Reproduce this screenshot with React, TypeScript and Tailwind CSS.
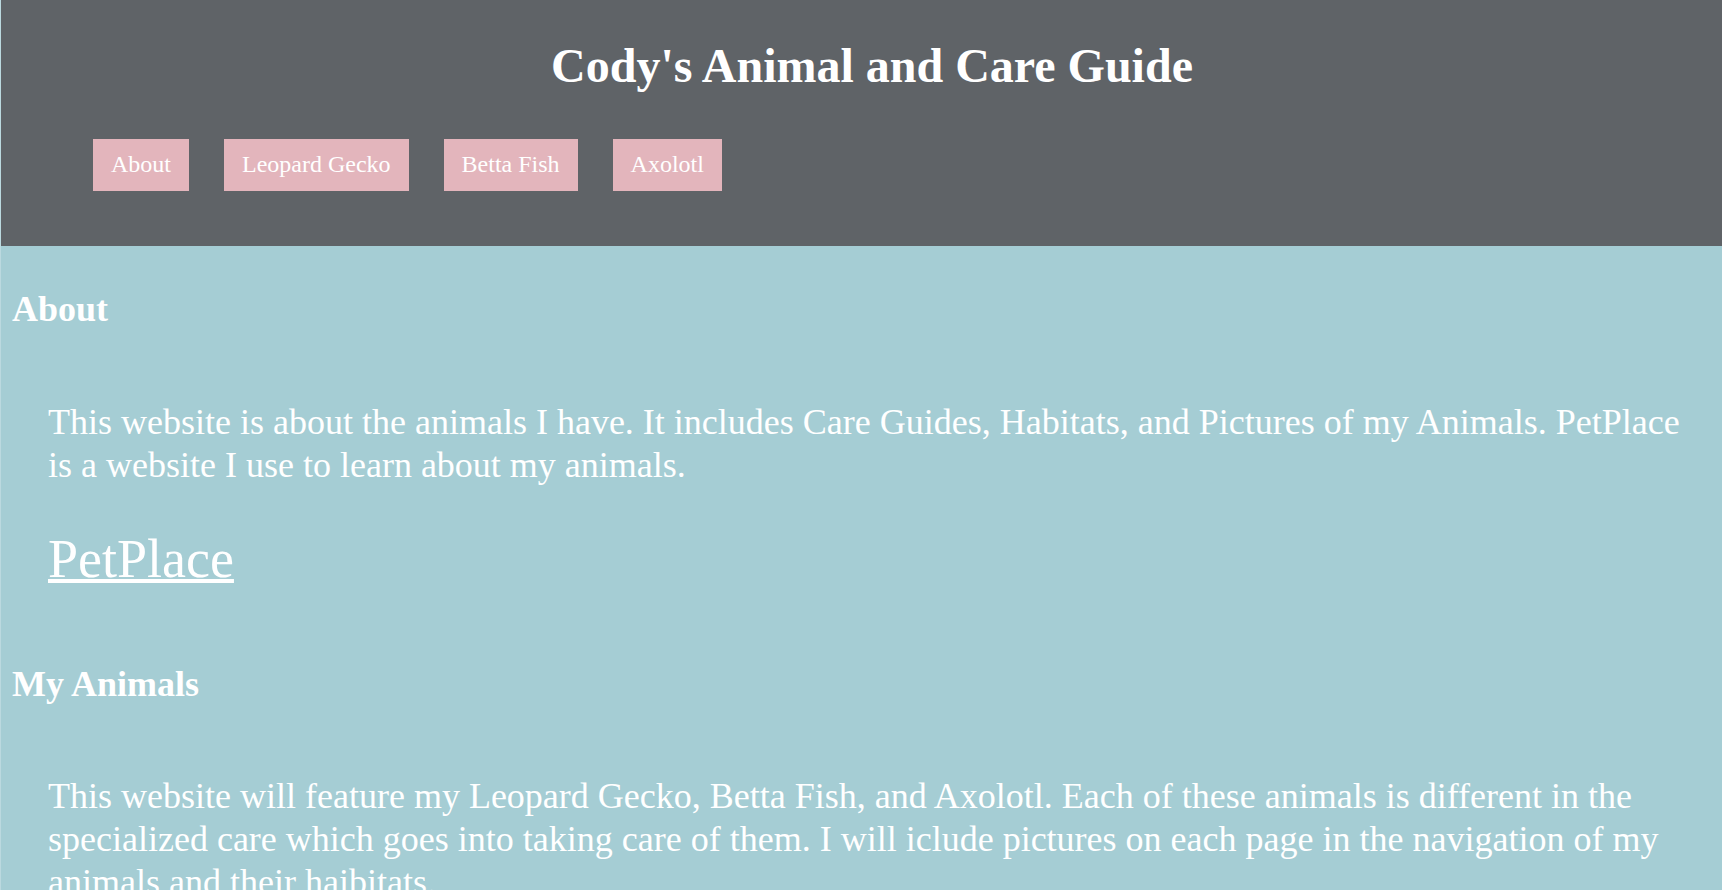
import React from 'react';

const links = ['About', 'Leopard Gecko', 'Betta Fish', 'Axolotl'];

export default function App() {
  return (
    <div className="min-h-screen border-l border-white/25 bg-[#a5cdd4] font-['Liberation_Serif',serif] text-white">
      <header className="h-[246px] bg-[#5f6367] pt-[38px]">
        <h1 className="pl-[21px] text-center text-[48px] font-bold leading-[1.15]">
          Cody's Animal and Care Guide
        </h1>
        <nav className="mt-[46px] flex gap-[35px] pl-[92px]">
          {links.map((label) => (
            <a
              key={label}
              href="#"
              className="bg-[#e3b5bc] px-[18px] py-[12px] text-[24px] leading-[1.15] text-white"
            >
              {label}
            </a>
          ))}
        </nav>
      </header>

      <main className="pl-[11px] pr-[20px] pt-[43px]">
        <h2 className="text-[36px] font-bold leading-[1.15]">About</h2>
        <p className="ml-[36px] mt-[71px] text-[36px] leading-[43px]">
          This website is about the animals I have. It includes Care Guides, Habitats, and Pictures of my
          Animals. PetPlace is a website I use to learn about my animals.
        </p>
        <div className="ml-[36px] mt-[41px] text-[54px] leading-[1.15]">
          <a href="#" className="text-white underline decoration-[4px]">
            PetPlace
          </a>
        </div>

        <h2 className="mt-[74px] text-[36px] font-bold leading-[1.15]">My Animals</h2>
        <p className="ml-[36px] mt-[69px] text-[36px] leading-[43px]">
          This website will feature my Leopard Gecko, Betta Fish, and Axolotl. Each of these animals is
          different in the specialized care which goes into taking care of them. I will iclude pictures on
          each page in the navigation of my animals and their haibitats.
        </p>
      </main>
    </div>
  );
}
